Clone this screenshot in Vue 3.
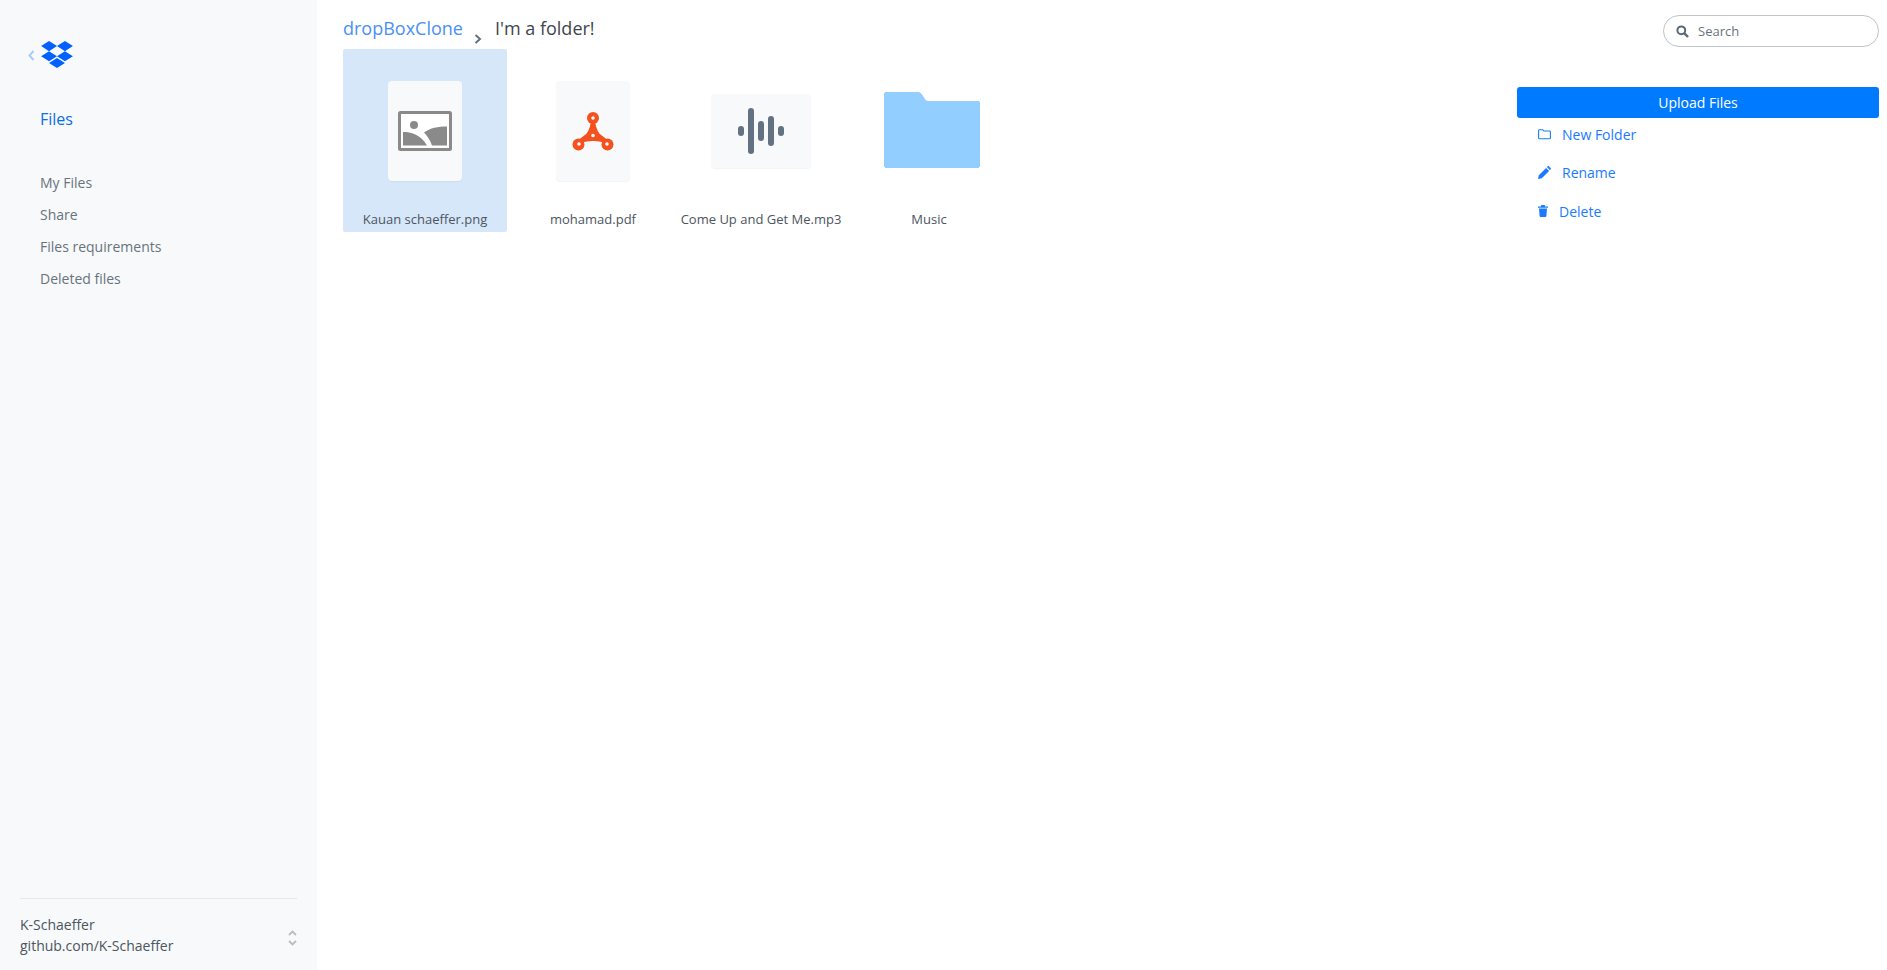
<template>
  <div class="page">
    <aside class="sidebar">
      <div class="brand">
        <svg class="back" width="7" height="11" viewBox="0 0 7 11"><path d="M5.5 1 1.5 5.5l4 4.5" fill="none" stroke="#a6cdf7" stroke-width="2" /></svg>
        <svg class="logo" width="32" height="27" viewBox="0 0 235.45 200"><path fill="#0061ff" d="M58.86 0 0 37.5 58.86 75l58.87-37.5zm117.73 0-58.86 37.5L176.59 75l58.86-37.5zM0 112.5 58.86 150l58.87-37.5L58.86 75zM176.59 75l-58.86 37.5 58.86 37.5 58.86-37.5zM58.86 162.5l58.87 37.5 58.86-37.5-58.86-37.5z" /></svg>
      </div>
      <h2 class="section">Files</h2>
      <nav class="menu">
        <a v-for="item in menu" :key="item" class="menu-item">{{ item }}</a>
      </nav>
      <div class="account">
        <div class="account-text">
          <div>K-Schaeffer</div>
          <div>github.com/K-Schaeffer</div>
        </div>
        <svg class="updown" width="9" height="16" viewBox="0 0 9 16"><path d="M1 5 4.500 1.500 8 5M1 11l3.500 3.500L8 11" fill="none" stroke="#b9bdc2" stroke-width="1.800" /></svg>
      </div>
    </aside>

    <main class="main">
      <header class="topbar">
        <div class="crumbs">
          <a class="crumb-link">dropBoxClone</a>
          <svg class="crumb-sep" width="8" height="10" viewBox="0 0 8 10"><path d="M1.500 1 6 5l-4.500 4" fill="none" stroke="#637282" stroke-width="2" /></svg>
          <span class="crumb-current">I'm a folder!</span>
        </div>
        <label class="search">
          <svg width="13" height="13" viewBox="0 0 13 13"><circle cx="5.300" cy="5.300" r="3.900" fill="none" stroke="#5b6875" stroke-width="2" /><path d="M8.200 8.200 12 12" stroke="#5b6875" stroke-width="2.400" /></svg>
          <input type="text" placeholder="Search" />
        </label>
      </header>

      <div class="content">
        <section class="tiles">
          <div class="tile selected">
            <div class="thumb">
              <div class="doc portrait">
                <svg width="54" height="40" viewBox="0 0 54 40">
                  <rect x="1.500" y="1.500" width="51" height="37" fill="#fff" stroke="#8a8a8a" stroke-width="3" rx="1" />
                  <circle cx="16" cy="14" r="4" fill="#8a8a8a" />
                  <path fill="#8a8a8a" d="M5 21c8 0 17 2 24 13.500H5z" />
                  <path fill="#8a8a8a" d="M26 21.500C32 17 40 15.500 49 15.500v19H34c-1.800-5-4.500-9.500-8-13z" />
                </svg>
              </div>
            </div>
            <div class="caption">Kauan schaeffer.png</div>
          </div>

          <div class="tile">
            <div class="thumb">
              <div class="doc portrait">
                <svg width="44" height="40" viewBox="0 0 44 40">
                  <path d="M22 6c0 8 3 15 7 19s6 6 9 6M22 6c0 8-3 15-7 19s-6 6-9 6" fill="none" stroke="#f4511e" stroke-width="0" />
                  <path d="M22 7 C22 15 24 20 27 24 L36 31 C30 27 14 27 8 31 L17 24 C20 20 22 15 22 7Z" fill="#f4511e" stroke="#f4511e" stroke-width="4" stroke-linejoin="round" />
                  <circle cx="22" cy="7" r="6" fill="#f4511e" />
                  <circle cx="7.500" cy="33.500" r="6" fill="#f4511e" />
                  <circle cx="36.500" cy="33.500" r="6" fill="#f4511e" />
                  <circle cx="22" cy="7" r="1.800" fill="#f7f9fa" />
                  <circle cx="22" cy="24.500" r="1.800" fill="#f7f9fa" />
                  <circle cx="8" cy="33" r="1.800" fill="#f7f9fa" />
                  <circle cx="36" cy="33" r="1.800" fill="#f7f9fa" />
                </svg>
              </div>
            </div>
            <div class="caption">mohamad.pdf</div>
          </div>

          <div class="tile">
            <div class="thumb">
              <div class="doc landscape">
                <svg width="46" height="46" viewBox="0 0 46 46">
                  <rect v-for="bar in bars" :key="bar.x" :x="bar.x" :y="23 - bar.h / 2" width="6" :height="bar.h" rx="3" fill="#637282" />
                </svg>
              </div>
            </div>
            <div class="caption">Come Up and Get Me.mp3</div>
          </div>

          <div class="tile">
            <div class="thumb">
              <svg class="folder" width="96" height="78" viewBox="0 0 96 78">
                <path fill="#7ab9f5" d="M3 2h29c3 0 5 1 6.500 3.500L41 9.500c1 1.300 2 1.500 4 1.500h48c1.700 0 3 1.300 3 3v61c0 1.700-1.300 3-3 3H3c-1.700 0-3-1.300-3-3V5c0-1.700 1.300-3 3-3z" transform="translate(0 -2)" />
                <path fill="#92ceff" d="M3 0h29c3 0 5 1 6.500 3.500L41 7.500c1 1.300 2 1.500 4 1.500h48c1.700 0 3 1.300 3 3v60c0 2-1.300 4-3 4H3c-1.700 0-3-2-3-4V3c0-1.700 1.300-3 3-3z" />
              </svg>
            </div>
            <div class="caption">Music</div>
          </div>
        </section>

        <section class="actions">
          <button class="upload">Upload Files</button>
          <a class="action">
            <svg width="13" height="13" viewBox="0 0 13 13"><path d="M.6 2.500c0-.5.3-.8.8-.8h3.300l1.200 1.300h5.700c.5 0 .8.300.8.800v6.100c0 .5-.3.800-.8.800H1.400c-.5 0-.8-.3-.8-.8z" fill="none" stroke="#1a7bff" stroke-width="1.100" /></svg>
            <span>New Folder</span>
          </a>
          <a class="action">
            <svg width="13" height="13" viewBox="0 0 13 13"><path fill="#1a7bff" d="M0 13l.8-3.800 7.300-7.300 3 3-7.300 7.300zM8.900 1.100 9.800.2c.3-.3.700-.3 1 0l2 2c.3.3.3.7 0 1l-.9.900z" /></svg>
            <span>Rename</span>
          </a>
          <a class="action delete">
            <svg width="10" height="12" viewBox="0 0 10 12"><path fill="#1a7bff" d="M0 1.500h3V.5C3 .2 3.200 0 3.500 0h3c.3 0 .5.200.5.500v1h3v1.200H0zM1 3.500h8l-.6 7.600c0 .5-.4.900-.9.900h-5c-.5 0-.9-.4-.9-.9z" /></svg>
            <span>Delete</span>
          </a>
        </section>
      </div>
    </main>
  </div>
</template>

<script setup>
const menu = ["My Files", "Share", "Files requirements", "Deleted files"];

const bars = [
  { x: 0, h: 10 },
  { x: 10, h: 46 },
  { x: 20, h: 20 },
  { x: 30, h: 30 },
  { x: 40, h: 10 },
];
</script>

<style>
html,
body {
  margin: 0;
  background: #fff;
}
</style>

<style scoped>
.page {
  display: flex;
  height: 970px;
  overflow: hidden;
  font-family: "Open Sans", "Noto Sans", sans-serif;
  font-size: 14px;
}

.sidebar {
  box-sizing: border-box;
  width: 317px;
  flex: none;
  display: flex;
  flex-direction: column;
  background: #f7f9fa;
  padding: 41px 20px 0;
}
.brand {
  display: flex;
  align-items: flex-end;
  height: 27px;
  margin-left: 8px;
}
.back {
  margin: 0 6px 7px 0;
}
.section {
  margin: 38px 0 0 20px;
  font-size: 16px;
  font-weight: 400;
  line-height: 26px;
  color: #0a6ee8;
}
.menu {
  display: flex;
  flex-direction: column;
  margin: 35px 0 0 20px;
}
.menu-item {
  line-height: 32px;
  color: #6a737d;
}
.account {
  margin-top: auto;
  height: 71px;
  border-top: 1px solid #e6e8eb;
  display: flex;
  align-items: center;
  justify-content: space-between;
  padding-right: 0;
}
.account-text {
  line-height: 21px;
  color: #4b5560;
}
.updown {
  margin: 6px 0 0 0;
}

.main {
  flex: 1;
  min-width: 0;
  padding: 0 8px 0 26px;
}
.topbar {
  display: flex;
  justify-content: space-between;
  align-items: flex-start;
  height: 49px;
}
.crumbs {
  display: flex;
  align-items: baseline;
  font-size: 18px;
  line-height: 25px;
  padding-top: 16px;
}
.crumb-link {
  color: #4a90f5;
}
.crumb-sep {
  margin: 0 13px 0 11px;
  align-self: flex-end;
  margin-bottom: -3px;
}
.crumb-current {
  color: #3d464d;
}
.search {
  box-sizing: border-box;
  width: 216px;
  height: 32px;
  margin-top: 15px;
  display: flex;
  align-items: center;
  gap: 9px;
  padding-left: 12px;
  border: 1px solid #c0c5cc;
  border-radius: 16px;
}
.search input {
  flex: 1;
  min-width: 0;
  border: 0;
  outline: 0;
  padding: 0;
  background: transparent;
  font: 13px "Open Sans", "Noto Sans", sans-serif;
}
.search input::placeholder {
  color: #6a737d;
  opacity: 1;
}

.content {
  display: flex;
  justify-content: space-between;
  align-items: flex-start;
}
.tiles {
  display: flex;
  gap: 4px;
}
.tile {
  width: 164px;
  height: 183px;
  border-radius: 2px;
  display: flex;
  flex-direction: column;
}
.selected {
  background: #d6e7fa;
}
.thumb {
  height: 164px;
  flex: none;
  display: flex;
  align-items: center;
  justify-content: center;
}
.doc {
  display: flex;
  align-items: center;
  justify-content: center;
  background: #f7f9fa;
  border-radius: 4px;
  box-shadow: 0 1px 1px rgba(0, 0, 0, 0.05);
}
.portrait {
  width: 74px;
  height: 100px;
}
.landscape {
  width: 100px;
  height: 74px;
}
.folder {
  margin-left: 6px;
}
.caption {
  margin-top: -3px;
  font-size: 13px;
  line-height: 18px;
  text-align: center;
  white-space: nowrap;
  color: #4b5560;
}

.actions {
  width: 362px;
  flex: none;
  margin-top: 38px;
  display: flex;
  flex-direction: column;
}
.upload {
  height: 31px;
  padding: 0;
  border: 0;
  border-radius: 3px;
  background: #007bff;
  color: #fff;
  font: 14px "Open Sans", "Noto Sans", sans-serif;
  margin-bottom: 0;
}
.action {
  display: flex;
  align-items: center;
  gap: 11px;
  height: 38.500px;
  padding-left: 21px;
  color: #1a7bff;
}
.action:first-of-type {
  margin-top: -3px;
}
.delete {
  gap: 11px;
}
</style>
